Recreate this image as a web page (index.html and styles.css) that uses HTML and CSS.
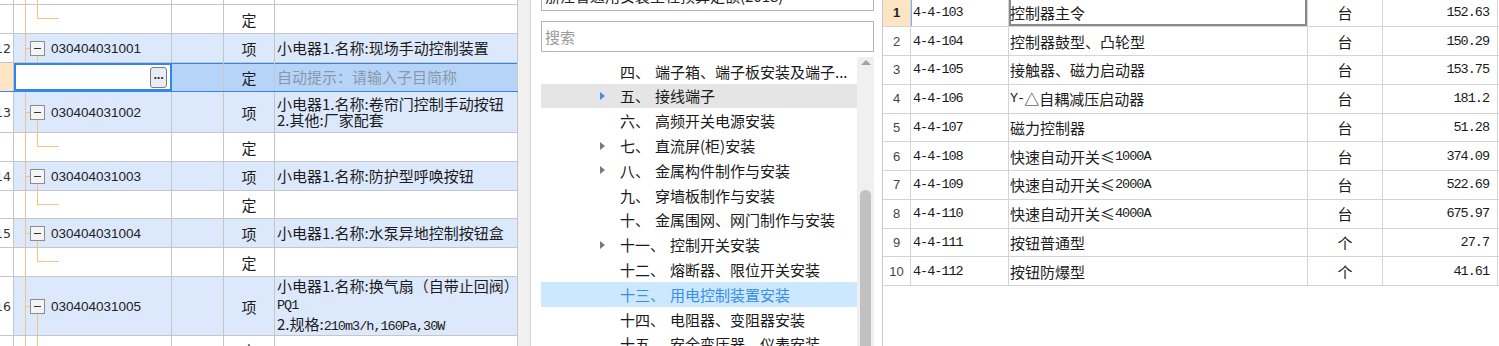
FILE: index.html
```html
<!DOCTYPE html>
<html>
<head>
    <title>定额子目选择</title>
    <meta charset="utf-8">
    <link rel="stylesheet" href="styles.css">
</head>
<body>
    <div class="sheet">
        <div class="row top">
            <div class="cell num"></div><div class="cell code"></div><div class="cell kind"></div><div class="cell unit"></div><div class="cell desc"></div>
        </div>
        <div class="row sub">
            <div class="cell num"></div><div class="cell code"></div><div class="cell kind"></div><div class="cell unit">定</div><div class="cell desc"></div>
        </div>
        <div class="row item">
            <div class="cell num">12</div>
            <div class="cell code"><span class="fold"></span>030404031001</div>
            <div class="cell kind"></div>
            <div class="cell unit">项</div>
            <div class="cell desc"><div class="txt">小电器1.名称:现场手动控制装置</div></div>
        </div>
        <div class="row sub edit">
            <div class="cell num"></div>
            <div class="cell code"><span class="more">···</span></div>
            <div class="cell kind"></div>
            <div class="cell unit">定</div>
            <div class="cell desc"><div class="txt hint">自动提示：请输入子目简称</div></div>
        </div>
        <div class="row item tall2">
            <div class="cell num">13</div>
            <div class="cell code"><span class="fold"></span>030404031002</div>
            <div class="cell kind"></div>
            <div class="cell unit">项</div>
            <div class="cell desc"><div class="txt lines">小电器1.名称:卷帘门控制手动按钮<br>2.其他:厂家配套</div></div>
        </div>
        <div class="row sub">
            <div class="cell num"></div><div class="cell code"></div><div class="cell kind"></div><div class="cell unit">定</div><div class="cell desc"></div>
        </div>
        <div class="row item">
            <div class="cell num">14</div>
            <div class="cell code"><span class="fold"></span>030404031003</div>
            <div class="cell kind"></div>
            <div class="cell unit">项</div>
            <div class="cell desc"><div class="txt">小电器1.名称:防护型呼唤按钮</div></div>
        </div>
        <div class="row sub short">
            <div class="cell num"></div><div class="cell code"></div><div class="cell kind"></div><div class="cell unit">定</div><div class="cell desc"></div>
        </div>
        <div class="row item">
            <div class="cell num">15</div>
            <div class="cell code"><span class="fold"></span>030404031004</div>
            <div class="cell kind"></div>
            <div class="cell unit">项</div>
            <div class="cell desc"><div class="txt">小电器1.名称:水泵异地控制按钮盒</div></div>
        </div>
        <div class="row sub">
            <div class="cell num"></div><div class="cell code"></div><div class="cell kind"></div><div class="cell unit">定</div><div class="cell desc"></div>
        </div>
        <div class="row item tall3">
            <div class="cell num">16</div>
            <div class="cell code"><span class="fold"></span>030404031005</div>
            <div class="cell kind"></div>
            <div class="cell unit">项</div>
            <div class="cell desc"><div class="txt lines3">小电器1.名称:换气扇（自带止回阀）<br><span class="mono">PQ1</span><br>2.规格:<span class="mono">210m3/h,160Pa,30W</span></div></div>
        </div>
        <div class="row sub">
            <div class="cell num"></div><div class="cell code"></div><div class="cell kind"></div><div class="cell unit">定</div><div class="cell desc"></div>
        </div>
    </div>

    <div class="picker">
        <div class="combo">浙江省通用安装工程预算定额(2018)</div>
        <div class="search">搜索</div>
        <div class="tree">
            <div class="tree-list">
                <div class="node"><span class="caret blank"></span><span class="no">四、</span>端子箱、端子板安装及端子...</div>
                <div class="node hover"><span class="caret"></span><span class="no">五、</span>接线端子</div>
                <div class="node"><span class="caret blank"></span><span class="no">六、</span>高频开关电源安装</div>
                <div class="node"><span class="caret"></span><span class="no">七、</span>直流屏(柜)安装</div>
                <div class="node"><span class="caret"></span><span class="no">八、</span>金属构件制作与安装</div>
                <div class="node"><span class="caret blank"></span><span class="no">九、</span>穿墙板制作与安装</div>
                <div class="node"><span class="caret blank"></span><span class="no">十、</span>金属围网、网门制作与安装</div>
                <div class="node"><span class="caret"></span><span class="no">十一、</span>控制开关安装</div>
                <div class="node"><span class="caret blank"></span><span class="no">十二、</span>熔断器、限位开关安装</div>
                <div class="node current"><span class="caret blank"></span><span class="no">十三、</span>用电控制装置安装</div>
                <div class="node"><span class="caret blank"></span><span class="no">十四、</span>电阻器、变阻器安装</div>
                <div class="node"><span class="caret blank"></span><span class="no">十五、</span>安全变压器、仪表安装</div>
            </div>
            <div class="vscroll">
                <span class="up"></span>
                <span class="thumb"></span>
            </div>
        </div>
    </div>

    <div class="codes">
        <div class="rrow sel">
            <div class="rc rn">1</div><div class="rc rcode">4-4-103</div><div class="rc rname">控制器主令</div><div class="rc runit">台</div><div class="rc rprice">152.63</div>
        </div>
        <div class="rrow">
            <div class="rc rn">2</div><div class="rc rcode">4-4-104</div><div class="rc rname">控制器鼓型、凸轮型</div><div class="rc runit">台</div><div class="rc rprice">150.29</div>
        </div>
        <div class="rrow">
            <div class="rc rn">3</div><div class="rc rcode">4-4-105</div><div class="rc rname">接触器、磁力启动器</div><div class="rc runit">台</div><div class="rc rprice">153.75</div>
        </div>
        <div class="rrow">
            <div class="rc rn">4</div><div class="rc rcode">4-4-106</div><div class="rc rname"><span class="mono">Y-</span>△自耦减压启动器</div><div class="rc runit">台</div><div class="rc rprice">181.2</div>
        </div>
        <div class="rrow">
            <div class="rc rn">5</div><div class="rc rcode">4-4-107</div><div class="rc rname">磁力控制器</div><div class="rc runit">台</div><div class="rc rprice">51.28</div>
        </div>
        <div class="rrow">
            <div class="rc rn">6</div><div class="rc rcode">4-4-108</div><div class="rc rname">快速自动开关≤<span class="mono">1000A</span></div><div class="rc runit">台</div><div class="rc rprice">374.09</div>
        </div>
        <div class="rrow">
            <div class="rc rn">7</div><div class="rc rcode">4-4-109</div><div class="rc rname">快速自动开关≤<span class="mono">2000A</span></div><div class="rc runit">台</div><div class="rc rprice">522.69</div>
        </div>
        <div class="rrow">
            <div class="rc rn">8</div><div class="rc rcode">4-4-110</div><div class="rc rname">快速自动开关≤<span class="mono">4000A</span></div><div class="rc runit">台</div><div class="rc rprice">675.97</div>
        </div>
        <div class="rrow">
            <div class="rc rn">9</div><div class="rc rcode">4-4-111</div><div class="rc rname">按钮普通型</div><div class="rc runit">个</div><div class="rc rprice">27.7</div>
        </div>
        <div class="rrow">
            <div class="rc rn">10</div><div class="rc rcode">4-4-112</div><div class="rc rname">按钮防爆型</div><div class="rc runit">个</div><div class="rc rprice">41.61</div>
        </div>
    </div>
</body>
</html>
```

FILE: styles.css
```css
* { box-sizing: border-box; }
body {
    margin: 0;
    width: 1499px;
    height: 346px;
    overflow: hidden;
    display: flex;
    background: #f0f0f0;
    font-family: "Noto Sans CJK SC", sans-serif;
    font-size: 15px;
    color: #1c1c1c;
}
.mono {
    font-family: "Liberation Mono", "Noto Sans CJK SC", monospace;
    font-size: 13.5px;
    letter-spacing: -1px;
}

/* left sheet */
.sheet {
    width: 518px;
    flex: none;
    background: #fff;
    display: flex;
    flex-direction: column;
}
.row { display: flex; flex: none; height: 29px; border-bottom: 1px solid #c6c6c6; }
.row.top { height: 5px; }
.row.short { height: 28px; }
.row.tall2 { height: 41px; }
.row.tall3 { height: 59px; }
.cell {
    height: 100%;
    display: flex;
    align-items: center;
    border-right: 1px solid #c6c6c6;
    white-space: nowrap;
    overflow: hidden;
}
.num {
    width: 14px;
    justify-content: flex-end;
    padding-right: 2px;
    font-family: "DejaVu Sans", sans-serif;
    font-size: 12.5px;
    color: #333;
}
.code {
    width: 158px;
    padding-left: 16px;
    gap: 6px;
    font-family: "Liberation Sans", sans-serif;
    font-size: 13.5px;
    color: #222;
    background: linear-gradient(#f7c480, #f7c480) 11px 0 / 1px 100% no-repeat;
}
.kind { width: 52px; }
.unit { width: 51px; justify-content: center; }
.desc { width: 243px; padding-left: 2px; }
.txt { line-height: 18px; }
.txt.lines { line-height: 16px; }
.txt.lines3 { line-height: 17.5px; }
.txt.hint { color: #8b98aa; }

.top .code {
    background:
        linear-gradient(#f7c480, #f7c480) 11px 0 / 1px 100% no-repeat,
        linear-gradient(#f7c480, #f7c480) 23px 0 / 1px 100% no-repeat;
}
.sub .code {
    background:
        linear-gradient(#f7c480, #f7c480) 11px 0 / 1px 100% no-repeat,
        linear-gradient(#f7c480, #f7c480) 23px 0 / 1px 14px no-repeat,
        linear-gradient(#f7c480, #f7c480) 23px 13px / 22px 1px no-repeat,
        #fff;
}
.item .kind, .item .unit, .item .desc { background: #dce8fb; }
.item .code {
    background:
        linear-gradient(#f7c480, #f7c480) 11px 0 / 1px 100% no-repeat,
        linear-gradient(#f7c480, #f7c480) 11px 50% / 5px 1px no-repeat,
        linear-gradient(#f7c480, #f7c480) 23px 100% / 1px 50% no-repeat,
        #dce8fb;
}
.fold {
    width: 15px;
    height: 15px;
    flex: none;
    border: 1px solid #8c8c8c;
    background: #f4f4f4;
    display: flex;
    align-items: center;
    justify-content: center;
}
.fold::before { content: ""; width: 7px; height: 1px; background: #333; }

/* row being edited */
.row.edit { border-bottom-color: #2f86ef; }
.edit .num { background: #ffe5c4; }
.edit .code {
    background: #fff;
    border: 2px solid #2f86ef;
    justify-content: flex-end;
    padding: 0 3px 0 0;
}
.edit .kind, .edit .unit, .edit .desc {
    background: #b5d4f7;
    box-shadow: inset 0 1px 0 #2f86ef;
}
.more {
    width: 17px;
    height: 21px;
    border: 1px solid #7d7d7d;
    border-radius: 3px;
    background: #e8ecf5;
    display: flex;
    align-items: center;
    justify-content: center;
    font-family: "Liberation Sans", sans-serif;
    font-size: 13px;
    font-weight: bold;
    color: #333;
    letter-spacing: -1px;
}

/* middle picker */
.picker {
    width: 352px;
    flex: none;
    margin-left: 12px;
    background: #fff;
    border-left: 1px solid #d4d4d4;
    padding: 0 8px 0 10px;
    display: flex;
    flex-direction: column;
}
.combo, .search {
    height: 31px;
    flex: none;
    border: 1px solid #b4b4b4;
    padding-left: 3px;
    line-height: 29px;
    white-space: nowrap;
    overflow: hidden;
}
.combo { margin-top: -20px; color: #222; }
.search { margin-top: 10px; color: #9b9b9b; }
.tree { margin-top: 5px; flex: 1; min-height: 0; display: flex; overflow: hidden; }
.tree-list { flex: 1; padding-top: 1.8px; overflow: hidden; }
.node {
    height: 24.8px;
    display: flex;
    align-items: center;
    padding-left: 59px;
    white-space: nowrap;
    color: #1a1a1a;
}
.node.hover { background: #e5e5e5; }
.node.current { background: #cce8ff; color: #3a8ee6; }
.node .no { margin-right: 5px; }
.caret {
    width: 0;
    height: 0;
    flex: none;
    margin-right: 15px;
    border-left: 5px solid #7a7a7a;
    border-top: 4px solid transparent;
    border-bottom: 4px solid transparent;
}
.caret.blank { border-left-color: transparent; }
.node.hover .caret { border-left-color: #3d8ef0; }
.vscroll {
    width: 17px;
    flex: none;
    background: #f0f0f0;
    display: flex;
    flex-direction: column;
    align-items: center;
}
.vscroll .up {
    width: 0;
    height: 0;
    margin-top: 3px;
    border-left: 5px solid transparent;
    border-right: 5px solid transparent;
    border-bottom: 5px solid #a3a3a3;
}
.vscroll .thumb {
    width: 11px;
    height: 166px;
    margin-top: auto;
    margin-bottom: -10px;
    background: #c1c1c1;
    border-radius: 6px;
}

/* right code list */
.codes {
    flex: 1;
    background: #fff;
    border-left: 1px solid #c8c8c8;
    display: flex;
    flex-direction: column;
}
.rrow { display: flex; flex: none; height: 28.8px; border-bottom: 1px solid #d4d4d4; }
.rrow:first-child { margin-top: -1.7px; }
.rc {
    height: 100%;
    display: flex;
    align-items: center;
    border-right: 1px solid #d4d4d4;
    white-space: nowrap;
}
.rn {
    width: 28px;
    justify-content: center;
    font-family: "Liberation Sans", sans-serif;
    font-size: 13px;
    color: #444;
}
.rcode {
    width: 98px;
    padding-left: 2px;
    font-family: "Liberation Mono", monospace;
    font-size: 13.5px;
    letter-spacing: -1px;
    color: #1a1a1a;
}
.rname { width: 299px; padding-left: 1px; }
.runit { width: 75px; justify-content: center; }
.rprice {
    width: 115px;
    justify-content: flex-end;
    padding-right: 8px;
    font-family: "Liberation Mono", monospace;
    font-size: 13.5px;
    letter-spacing: -1px;
    color: #1a1a1a;
}
.rrow.sel .rn { background: #fde4c2; font-weight: bold; color: #222; }
.rrow.sel .rcode { box-shadow: inset 1px 0 0 #7fb0ee; }
.rrow.sel .rname { box-shadow: inset 2px 0 0 #8a8a8a, inset -2px 0 0 #8a8a8a, inset 0 -2px 0 #8a8a8a; }
```
